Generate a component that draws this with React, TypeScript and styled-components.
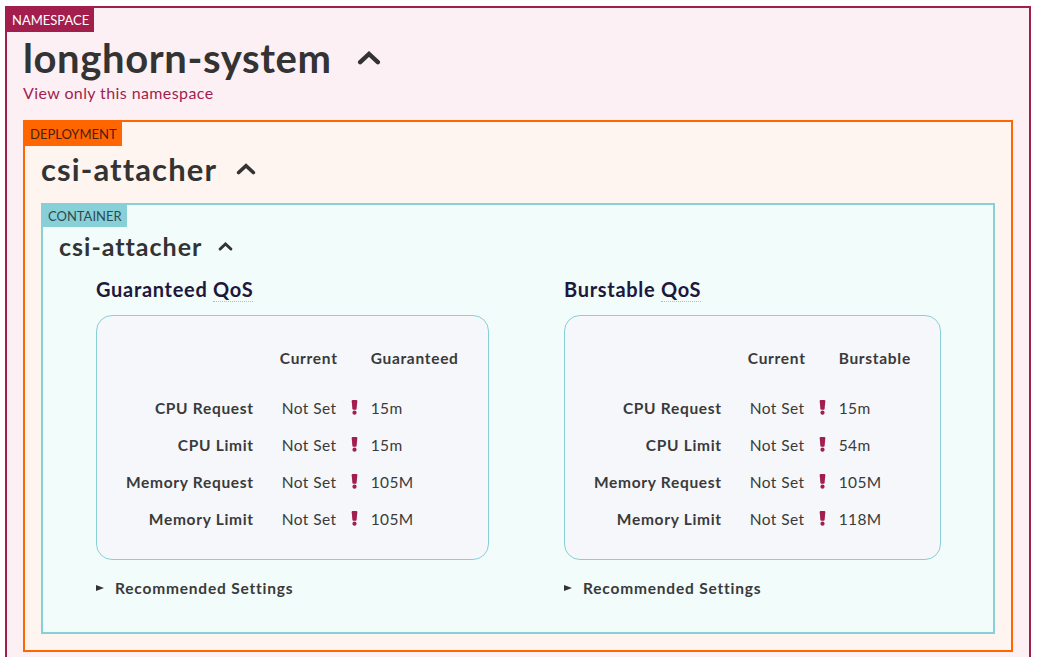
import React from "react";
import styled, { createGlobalStyle, css } from "styled-components";

const Global = createGlobalStyle`
  html, body { margin: 0; padding: 0; background: #ffffff; }
  body { font-family: Lato, "Noto Sans", sans-serif; color: #333; overflow: hidden; }
`;

type Kind = "namespace" | "deployment" | "container";

const palette: Record<Kind, { border: string; bg: string; tag: string; tagText: string }> = {
  namespace: { border: "#a21e4d", bg: "#fcf0f4", tag: "#a21e4d", tagText: "#ffffff" },
  deployment: { border: "#ff6600", bg: "#fff5f0", tag: "#ff6600", tagText: "#4a2010" },
  container: { border: "#87d0d8", bg: "#f2fcfb", tag: "#87d0d8", tagText: "#2f4a4f" },
};

const Page = styled.div`
  padding: 6px 9px 0 5px;
  height: 657px;
  box-sizing: border-box;
  overflow: hidden;
`;

const Group = styled.section<{ $kind: Kind }>`
  border: 2px solid ${(p) => palette[p.$kind].border};
  background: ${(p) => palette[p.$kind].bg};
  display: flex;
  flex-direction: column;
  ${(p) => p.$kind === "namespace" && css`min-height: 700px;`}
`;

const Tag = styled.div<{ $kind: Kind }>`
  align-self: flex-start;
  background: ${(p) => palette[p.$kind].tag};
  color: ${(p) => palette[p.$kind].tagText};
  font-size: 13px;
  line-height: 1;
  padding: 0 5px;
  height: ${(p) => (p.$kind === "container" ? 22 : 24)}px;
  display: flex;
  align-items: center;
`;

const Body = styled.div<{ $bottom: number }>`
  display: flex;
  flex-direction: column;
  padding: 0 16px ${(p) => p.$bottom}px 16px;
`;

const Title = styled.h1<{ $size: number; $line: number; $ls: number; $gap: number; $mt: number; $mb: number }>`
  margin: ${(p) => p.$mt}px 0 ${(p) => p.$mb}px 0;
  font-size: ${(p) => p.$size}px;
  line-height: ${(p) => p.$line}px;
  letter-spacing: ${(p) => p.$ls}px;
  font-weight: 700;
  color: #333333;
  display: flex;
  align-items: center;
  gap: ${(p) => p.$gap}px;
`;

const NsLink = styled.a`
  align-self: flex-start;
  color: #a21e4d;
  font-size: 16px;
  letter-spacing: 0.4px;
  line-height: 18px;
  margin-top: 3px;
  margin-bottom: 18px;
  text-decoration: none;
`;

const Chevron = ({ w, h }: { w: number; h: number }) => (
  <svg width={w} height={h} viewBox="0 0 24 14" aria-hidden="true">
    <path d="M3.2 11.2 L12 3 L20.8 11.2" fill="none" stroke="#333" strokeWidth="4.4" strokeLinecap="round" strokeLinejoin="miter" />
  </svg>
);

const Columns = styled.div`
  display: grid;
  grid-template-columns: 468px auto;
  padding-left: 37px;
`;

const QosCol = styled.div`
  display: flex;
  flex-direction: column;
  align-items: flex-start;
`;

const QosHeading = styled.h3`
  margin: 0;
  font-size: 20px;
  letter-spacing: 0.7px;
  font-weight: 700;
  line-height: 23px;
  color: #21163b;
`;

const Abbr = styled.span`
  border-bottom: 1px dotted #87d0d8;
`;

const Card = styled.div`
  margin-top: 14px;
  border: 1px solid #87d0d8;
  border-radius: 16px;
  background: #f5f7fb;
  padding: 23px 29px 22px 29px;
  display: grid;
  grid-template-columns: auto auto auto auto;
  grid-template-rows: 50px repeat(4, 37px);
  column-gap: 13px;
  align-items: center;
  white-space: nowrap;
`;

const boldText = css`
  font-size: 15.5px;
  font-weight: 700;
  letter-spacing: 0.7px;
  color: #3a3a3a;
`;

const HeadCell = styled.div`
  ${boldText}
  align-self: start;
  line-height: 37px;
  padding-top: 1px;
`;

const RowLabel = styled.div`
  ${boldText}
  text-align: right;
  padding-right: 13px;
`;

const Cell = styled.div`
  font-size: 15.5px;
  letter-spacing: 0.4px;
  color: #3a3a3a;
`;

const NotSet = styled(Cell)`
  padding-left: 2px;
`;

const BangBox = styled.div`
  display: flex;
  align-items: center;
`;

const Bang = () => (
  <BangBox>
    <svg width="7" height="15" viewBox="0 0 7 15" aria-hidden="true">
      <path d="M1.6 0 H5.4 Q6.4 0 6.3 1.2 L5.6 9 Q5.5 9.8 4.7 9.8 H2.3 Q1.5 9.8 1.4 9 L0.7 1.2 Q0.6 0 1.6 0 Z" fill="#a21e4d" />
      <circle cx="3.5" cy="12.7" r="2.1" fill="#a21e4d" />
    </svg>
  </BangBox>
);

const Summary = styled.div`
  ${boldText}
  letter-spacing: 0.8px;
  margin-top: 19px;
  display: flex;
  align-items: center;
  gap: 11px;
  line-height: 18px;
`;

const Triangle = styled.span`
  width: 0;
  height: 0;
  border-top: 3.5px solid transparent;
  border-bottom: 3.5px solid transparent;
  border-left: 8px solid #333;
`;

type Row = { label: string; value: string };

const QosCard = ({ name, target, rows }: { name: string; target: string; rows: Row[] }) => (
  <QosCol>
    <QosHeading>
      {name} <Abbr>QoS</Abbr>
    </QosHeading>
    <Card>
      <HeadCell />
      <HeadCell>Current</HeadCell>
      <HeadCell />
      <HeadCell>{target}</HeadCell>
      {rows.map((r) => (
        <React.Fragment key={r.label}>
          <RowLabel>{r.label}</RowLabel>
          <NotSet>Not Set</NotSet>
          <Bang />
          <Cell>{r.value}</Cell>
        </React.Fragment>
      ))}
    </Card>
    <Summary>
      <Triangle />
      Recommended Settings
    </Summary>
  </QosCol>
);

export default function App() {
  return (
    <>
      <Global />
      <Page>
        <Group $kind="namespace">
          <Tag $kind="namespace">NAMESPACE</Tag>
          <Body $bottom={16}>
            <Title $size={40} $line={46} $ls={0.6} $gap={25} $mt={3} $mb={0}>
              longhorn-system <Chevron w={24} h={14} />
            </Title>
            <NsLink href="#">View only this namespace</NsLink>
            <Group $kind="deployment">
              <Tag $kind="deployment">DEPLOYMENT</Tag>
              <Body $bottom={16}>
                <Title $size={31} $line={38} $ls={1.1} $gap={19} $mt={4} $mb={15}>
                  csi-attacher <Chevron w={20} h={12} />
                </Title>
                <Group $kind="container">
                  <Tag $kind="container">CONTAINER</Tag>
                  <Body $bottom={35}>
                    <Title $size={25} $line={30} $ls={1} $gap={16} $mt={4} $mb={17}>
                      csi-attacher <Chevron w={15} h={11} />
                    </Title>
                    <Columns>
                      <QosCard
                        name="Guaranteed"
                        target="Guaranteed"
                        rows={[
                          { label: "CPU Request", value: "15m" },
                          { label: "CPU Limit", value: "15m" },
                          { label: "Memory Request", value: "105M" },
                          { label: "Memory Limit", value: "105M" },
                        ]}
                      />
                      <QosCard
                        name="Burstable"
                        target="Burstable"
                        rows={[
                          { label: "CPU Request", value: "15m" },
                          { label: "CPU Limit", value: "54m" },
                          { label: "Memory Request", value: "105M" },
                          { label: "Memory Limit", value: "118M" },
                        ]}
                      />
                    </Columns>
                  </Body>
                </Group>
              </Body>
            </Group>
          </Body>
        </Group>
      </Page>
    </>
  );
}
